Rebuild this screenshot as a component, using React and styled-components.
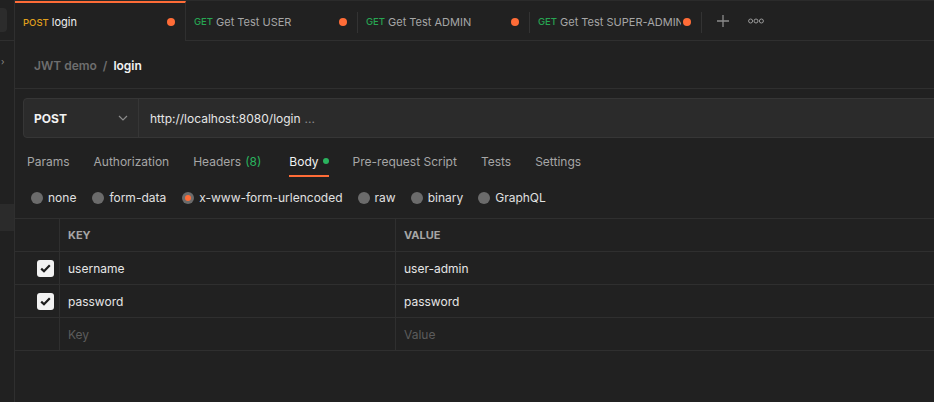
import styled, { createGlobalStyle } from "styled-components";
import { useState } from "react";

const Global = createGlobalStyle`
  html, body { margin: 0; padding: 0; background: #212121; }
  body { font-family: Inter, "Noto Sans", sans-serif; -webkit-font-smoothing: antialiased; }
  * { box-sizing: border-box; }
`;

const Page = styled.div`
  width: 934px;
  height: 402px;
  display: flex;
  background: #212121;
  overflow: hidden;
`;

const Sidebar = styled.div`
  width: 15px;
  flex-shrink: 0;
  border-right: 1px solid #2f2f2f;
  display: flex;
  flex-direction: column;
`;

const SideTop = styled.div`
  height: 41px;
  border-bottom: 1px solid #2f2f2f;
  padding-top: 8px;
`;

const SideSearch = styled.div`
  width: 7px;
  height: 24px;
  background: #2c2c2c;
  border-radius: 0 4px 4px 0;
`;

const SideArrow = styled.div`
  height: 20px;
  margin-top: 11px;
  padding-left: 1px;
  color: #8a8a8a;
  font-size: 9px;
  line-height: 20px;
`;

const SideSelected = styled.div`
  height: 27px;
  margin-top: 132px;
  background: #2b2b2b;
`;

const Main = styled.div`
  flex: 1;
  min-width: 0;
  display: flex;
  flex-direction: column;
`;

const TabBar = styled.div`
  height: 41px;
  display: flex;
  align-items: stretch;
  border-top: 1px solid #2b2b2b;
  border-bottom: 1px solid #2f2f2f;
`;

const Tab = styled.div`
  position: relative;
  width: ${p => (p.$first ? 171 : 172)}px;
  display: flex;
  align-items: center;
  padding: 0 10px 0 8px;
  margin-bottom: ${p => (p.$active ? "-1px" : "0")};
  background: #212121;
  border-top: 2px solid ${p => (p.$active ? "#ff6c37" : "transparent")};
  border-right: 1px solid ${p => (p.$active ? "#2f2f2f" : "transparent")};
  &::after {
    content: "";
    display: ${p => (p.$active ? "none" : "block")};
    position: absolute;
    right: -1px;
    top: 9px;
    height: 21px;
    width: 1px;
    background: #333;
  }
`;

const Method = styled.span`
  font-size: 9.5px;
  font-weight: 500;
  color: ${p => p.$color};
  margin-right: 3px;
`;

const TabName = styled.span`
  flex: 1;
  font-size: 11px;
  color: ${p => (p.$active ? "#f0f0f0" : "#a6a6a6")};
  white-space: nowrap;
  overflow: hidden;
`;

const Dot = styled.span`
  width: 8px;
  height: 8px;
  border-radius: 50%;
  background: ${p => p.$color};
  flex-shrink: 0;
  margin-left: 2px;
`;

const TabAction = styled.div`
  width: ${p => p.$w}px;
  display: flex;
  align-items: center;
  justify-content: center;
  color: #8c8c8c;
`;

const Crumbs = styled.div`
  height: 48px;
  border-bottom: 1px solid #2f2f2f;
  display: flex;
  align-items: center;
  padding: 2px 0 0 19px;
  font-size: 12px;
  font-weight: 600;
  gap: 6px;
`;

const Crumb = styled.span`
  color: ${p => (p.$current ? "#f2f2f2" : "#6e6e6e")};
`;

const UrlBox = styled.div`
  margin: 9px -20px 0 8px;
  height: 40px;
  display: flex;
  background: #2b2b2b;
  border: 1px solid #363636;
  border-radius: 4px;
`;

const MethodSelect = styled.div`
  width: 115px;
  display: flex;
  align-items: center;
  justify-content: space-between;
  padding: 0 10px 0 10px;
  border-right: 1px solid #363636;
  font-size: 12px;
  font-weight: 700;
  color: #f2f2f2;
`;

const UrlText = styled.div`
  display: flex;
  align-items: center;
  padding-left: 11px;
  font-size: 12px;
  color: #e6e6e6;
  span { color: #8c8c8c; margin-left: 4px; }
`;

const ReqTabs = styled.div`
  display: flex;
  gap: 24px;
  padding: 0 0 0 12px;
  margin-top: 8px;
  height: 31px;
`;

const ReqTab = styled.div`
  display: flex;
  align-items: center;
  gap: 4px;
  font-size: 12px;
  color: ${p => (p.$active ? "#f2f2f2" : "#a6a6a6")};
  border-bottom: 2px solid ${p => (p.$active ? "#ff6c37" : "transparent")};
  padding-top: 1px;
  em { font-style: normal; color: #2ab35e; margin-right: 4px; }
`;

const GreenDot = styled.span`
  width: 6px;
  height: 6px;
  border-radius: 50%;
  background: #2ab35e;
`;

const Radios = styled.div`
  display: flex;
  align-items: center;
  padding-left: 16px;
  height: 41px;
`;

const RadioItem = styled.label`
  display: flex;
  align-items: center;
  gap: 5px;
  font-size: 12px;
  color: #e0e0e0;
  margin-right: ${p => p.$mr}px;
`;

const RadioCircle = styled.span`
  width: 12px;
  height: 12px;
  border-radius: 50%;
  background: #6b6b6b;
  display: flex;
  align-items: center;
  justify-content: center;
  &::after {
    content: "";
    width: 6px;
    height: 6px;
    border-radius: 50%;
    background: ${p => (p.$on ? "#ff6c37" : "transparent")};
  }
`;

const Table = styled.div`
  border-top: 1px solid #2f2f2f;
`;

const Row = styled.div`
  display: grid;
  grid-template-columns: 44px 336px 1fr;
  height: 33px;
  border-bottom: 1px solid #2f2f2f;
`;

const Cell = styled.div`
  display: flex;
  align-items: center;
  padding-left: 8px;
  border-left: ${p => (p.$first ? "none" : "1px solid #2f2f2f")};
  font-size: ${p => (p.$head ? 11 : 12)}px;
  font-weight: ${p => (p.$head ? 700 : 400)};
  color: ${p => (p.$head ? "#a6a6a6" : p.$muted ? "#5c5c5c" : "#e6e6e6")};
  justify-content: ${p => (p.$first ? "flex-end" : "flex-start")};
  padding-right: ${p => (p.$first ? "5px" : "0")};
`;

const Check = styled.span`
  width: 17px;
  height: 17px;
  border-radius: 3px;
  background: #f2f2f2;
  display: flex;
  align-items: center;
  justify-content: center;
`;

const tabs = [
  { method: "POST", color: "#e0a01c", name: "login", active: true },
  { method: "GET", color: "#27a552", name: "Get Test USER" },
  { method: "GET", color: "#27a552", name: "Get Test ADMIN" },
  { method: "GET", color: "#27a552", name: "Get Test SUPER-ADMIN" },
];

const reqTabs = ["Params", "Authorization", "Headers", "Body", "Pre-request Script", "Tests", "Settings"];

const radios = [
  { label: "none", mr: 16 },
  { label: "form-data", mr: 16 },
  { label: "x-www-form-urlencoded", mr: 15 },
  { label: "raw", mr: 15 },
  { label: "binary", mr: 15 },
  { label: "GraphQL", mr: 0 },
];

const params = [
  { key: "username", value: "user-admin" },
  { key: "password", value: "password" },
];

const CheckIcon = () => (
  <svg width="11" height="9" viewBox="0 0 11 9">
    <path d="M1.2 4.6 L4 7.3 L9.8 1.3" fill="none" stroke="#1c1c1c" strokeWidth="2.2" />
  </svg>
);

export default function App() {
  const [body] = useState("x-www-form-urlencoded");
  return (
    <Page>
      <Global />
      <Sidebar>
        <SideTop><SideSearch /></SideTop>
        <SideArrow>›</SideArrow>
        <SideSelected />
      </Sidebar>
      <Main>
        <TabBar>
          {tabs.map((t, i) => (
            <Tab key={i} $active={t.active} $first={i === 0}>
              <Method $color={t.color}>{t.method}</Method>
              <TabName $active={t.active}>{t.name}</TabName>
              <Dot $color="#ff6c37" />
            </Tab>
          ))}
          <TabAction $w={42}>
            <svg width="14" height="14" viewBox="0 0 14 14">
              <path d="M7 1v12M1 7h12" stroke="#8c8c8c" strokeWidth="1.3" />
            </svg>
          </TabAction>
          <TabAction $w={24}>
            <svg width="16" height="6" viewBox="0 0 16 6">
              {[2.6, 8, 13.4].map(x => (
                <circle key={x} cx={x} cy="3" r="2" fill="none" stroke="#9a9a9a" strokeWidth="1" />
              ))}
            </svg>
          </TabAction>
        </TabBar>
        <Crumbs>
          <Crumb>JWT demo</Crumb>
          <Crumb>/</Crumb>
          <Crumb $current>login</Crumb>
        </Crumbs>
        <UrlBox>
          <MethodSelect>
            POST
            <svg width="10" height="6" viewBox="0 0 10 6">
              <path d="M1 1l4 4 4-4" fill="none" stroke="#8c8c8c" strokeWidth="1.2" />
            </svg>
          </MethodSelect>
          <UrlText>http://localhost:8080/login<span>...</span></UrlText>
        </UrlBox>
        <ReqTabs>
          {reqTabs.map(t => (
            <ReqTab key={t} $active={t === "Body"}>
              {t}
              {t === "Headers" && <em>(8)</em>}
              {t === "Body" && <GreenDot />}
            </ReqTab>
          ))}
        </ReqTabs>
        <Radios>
          {radios.map(r => (
            <RadioItem key={r.label} $mr={r.mr}>
              <RadioCircle $on={r.label === body} />
              {r.label}
            </RadioItem>
          ))}
        </Radios>
        <Table>
          <Row>
            <Cell $first />
            <Cell $head>KEY</Cell>
            <Cell $head>VALUE</Cell>
          </Row>
          {params.map(p => (
            <Row key={p.key}>
              <Cell $first><Check><CheckIcon /></Check></Cell>
              <Cell>{p.key}</Cell>
              <Cell>{p.value}</Cell>
            </Row>
          ))}
          <Row>
            <Cell $first />
            <Cell $muted>Key</Cell>
            <Cell $muted>Value</Cell>
          </Row>
        </Table>
      </Main>
    </Page>
  );
}
